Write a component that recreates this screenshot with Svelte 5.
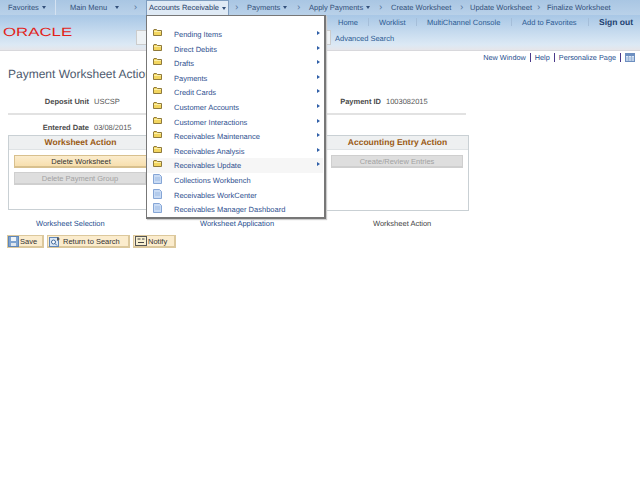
<script>
  const nav = [
    { label: 'Favorites', cls: 'w-fav', caret: true },
    { label: 'Main Menu', cls: 'w-main', caret: true, sep: true },
    { label: 'Accounts Receivable', cls: 'w-ar', caret: true, active: true },
    { label: 'Payments', cls: 'w-pay', caret: true, chev: true },
    { label: 'Apply Payments', cls: 'w-apply', caret: true, chev: true },
    { label: 'Create Worksheet', cls: 'w-create', chev: true },
    { label: 'Update Worksheet', cls: 'w-update', chev: true },
    { label: 'Finalize Worksheet', cls: 'w-final', chev: true }
  ];
  const folders = ['Pending Items', 'Direct Debits', 'Drafts', 'Payments', 'Credit Cards', 'Customer Accounts', 'Customer Interactions', 'Receivables Maintenance', 'Receivables Analysis', 'Receivables Update'];
  const pages = ['Collections Workbench', 'Receivables WorkCenter', 'Receivables Manager Dashboard'];
</script>

<div class="page">
  <nav class="nav">
    {#each nav as n}
      <div class="nav-item {n.cls}" class:active={n.active} class:sep={n.sep}>
        {#if n.chev}<span class="chev">›</span>{/if}
        <span>{n.label}</span>
        {#if n.caret}<i class="caret"></i>{/if}
      </div>
    {/each}
  </nav>

  <header class="head">
    <div class="logo-col"><span class="logo">ORACLE</span></div>
    <div class="search-col">
      <div class="search-box"></div>
    </div>
    <div class="right-col">
      <div class="tools">
        <a class="t-home">Home</a>
        <a class="t-work">Worklist</a>
        <a class="t-multi">MultiChannel Console</a>
        <a class="t-add">Add to Favorites</a>
        <a class="t-sign">Sign out</a>
      </div>
      <div class="adv">Advanced Search</div>
    </div>
  </header>

  <div class="links">
    <a>New Window</a><b></b><a>Help</a><b></b><a>Personalize Page</a><b></b>
    <svg width="10" height="9" viewBox="0 0 10 9"><rect x="0.5" y="0.5" width="9" height="8" fill="#dbe8f6" stroke="#6d8fc0"/><rect x="1" y="1" width="8" height="2" fill="#6d8fc0"/><path d="M1 5h8M1 7h8M3.5 3v5M6.5 3v5" stroke="#9db6d8"/></svg>
  </div>

  <h1 class="title">Payment Worksheet Action</h1>

  <div class="fields">
    <span class="lab l1">Deposit Unit</span><span class="val">USCSP</span>
    <span class="lab l2">Payment ID</span><span class="val">1003082015</span>
  </div>
  <div class="rule"></div>
  <div class="fields date">
    <span class="lab l1">Entered Date</span><span class="val">03/08/2015</span>
  </div>

  <div class="boxes">
    <section class="box b1">
      <h2>Worksheet Action</h2>
      <button class="btn primary">Delete Worksheet</button>
      <button class="btn off short">Delete Payment Group</button>
    </section>
    <section class="box b2"></section>
    <section class="box b3">
      <h2>Accounting Entry Action</h2>
      <button class="btn off">Create/Review Entries</button>
    </section>
  </div>

  <div class="tabs">
    <a class="tab1">Worksheet Selection</a>
    <a class="tab2">Worksheet Application</a>
    <span class="tab3">Worksheet Action</span>
  </div>

  <div class="toolbar">
    <button class="tb s">
      <svg width="11" height="11" viewBox="0 0 11 11"><rect x="0.5" y="0.5" width="10" height="10" fill="#7ea3d0" stroke="#5f86b8"/><rect x="3" y="1" width="5" height="4" fill="#eef4fa"/><rect x="3" y="7" width="5" height="3" fill="#dfe6ee"/></svg>
      <span>Save</span>
    </button>
    <button class="tb r">
      <svg width="12" height="11" viewBox="0 0 12 11"><rect x="0.5" y="1.5" width="9" height="9" fill="#dbe7f5" stroke="#5f86b8"/><circle cx="4.5" cy="6" r="2" fill="#fff" stroke="#41689c"/><path d="M6 7.5l2 2" stroke="#41689c"/><path d="M8 1l3 2-3 2z" fill="#555"/></svg>
      <span>Return to Search</span>
    </button>
    <button class="tb n">
      <svg width="12" height="10" viewBox="0 0 12 10"><rect x="0.5" y="0.5" width="11" height="9" fill="#f7efd0" stroke="#555"/><path d="M2.5 3h3M7 3h2.5M3 6.5h6" stroke="#444"/></svg>
      <span>Notify</span>
    </button>
  </div>

  <div class="menu">
    {#each folders as f}
      <div class="mi" class:hover={f === 'Receivables Update'}>
        <svg class="ic" width="9" height="7" viewBox="0 0 9 7"><path d="M0.5 6.5V1l.5-.5h2.5l1 1h4v5z" fill="#f3d660" stroke="#8f7a3c"/><path d="M1 2.5h7" stroke="#fbeea8"/></svg>
        <span class="mt">{f}</span>
        <i class="arrow"></i>
      </div>
    {/each}
    {#each pages as p}
      <div class="mi">
        <svg class="ic doc" width="9" height="10" viewBox="0 0 9 10"><path d="M0.5 0.5h6l2 2v7h-8z" fill="#c9dbf4" stroke="#86a6d6"/><path d="M2 4h5M2 6h5" stroke="#9dbbe4"/></svg>
        <span class="mt">{p}</span>
      </div>
    {/each}
  </div>
</div>

<style>
  :global(body) { margin: 0; background: #fff; }
  .page { position: relative; width: 640px; height: 480px; overflow: hidden; font-family: "Liberation Sans", Arial, sans-serif; font-size: 7.5px; color: #444; text-rendering: geometricPrecision; }
  a { color: #1f4f8f; }

  .nav { display: flex; height: 15px; background: linear-gradient(#a9c6e3, #b9d1e9); color: #33507a; line-height: 14px; }
  .nav-item { position: relative; box-sizing: border-box; display: flex; align-items: center; white-space: nowrap; flex: none; }
  .w-fav { width: 56px; padding-left: 8px; border-right: 1px solid #d4e2f1; }
  .w-main { width: 90px; padding-left: 14px; }
  .w-ar { width: 83px; padding-left: 2px; background: #dfeaf5; color: #1f3d68; border: 1px solid #7f9dbf; border-bottom: 0; }
  .w-pay { width: 66px; padding-left: 4px; }
  .w-apply { width: 82px; }
  .w-create { width: 83px; }
  .w-update { width: 77px; }
  .w-final { width: 93px; }
  .chev { width: 14px; flex: none; text-align: left; font-size: 10px; color: #58759c; padding-left: 2px; box-sizing: border-box; }
  .w-update .chev, .w-final .chev { width: 10px; padding-left: 0; }
  .caret { margin-left: 3px; border: 2.5px solid transparent; border-top: 3px solid #33507a; border-bottom: 0; }
  .w-main .caret { margin-left: 8px; }
  .w-main::after { content: "›"; position: absolute; right: 9px; font-size: 10px; color: #58759c; }

  .head { display: flex; height: 36px; box-sizing: border-box; background: linear-gradient(#a8c7e6, #dce9f5 85%, #e6e6ea); border-bottom: 1px solid #d8d8dc; }
  .logo-col { width: 136px; padding: 11px 0 0 3px; box-sizing: border-box; }
  .logo { display: inline-block; color: #e2231a; font-size: 12px; line-height: 12px; font-weight: 400; transform: scaleX(1.4); transform-origin: left; }
  .search-col { width: 199px; padding-top: 15px; box-sizing: border-box; }
  .search-box { width: 195px; height: 15px; background: #eef2f5; border: 1px solid #ccc; box-sizing: border-box; }
  .right-col { flex: 1; padding-top: 1px; }
  .tools { display: flex; height: 13px; padding-left: 3px; line-height: 13px; }
  .tools a { position: relative; flex: none; color: #2b5a92; }
  .tools a:not(.t-sign)::after { content: ""; position: absolute; right: 10px; top: 2px; width: 1px; height: 8px; background: #a5bed9; }
  .t-home { width: 41px; } .t-work { width: 48px; } .t-multi { width: 95px; } .t-add { width: 77px; }
  .tools .t-sign { font-size: 8.5px; font-weight: 700; color: #1c3f70; }
  .adv { margin-top: 4px; color: #2b5a92; line-height: 12px; }

  .links { display: flex; justify-content: flex-end; align-items: center; gap: 4px; height: 12px; padding: 0 5px 0 0; font-size: 7.3px; }
  .links a { color: #1f4f8f; }
  .links b { width: 1px; height: 9px; background: #4b3a8a; }

  .title { margin: 3px 0 0 8px; font-size: 12px; line-height: 16px; font-weight: 400; color: #4d5a6e; }

  .fields { display: flex; height: 12px; margin-top: 14px; line-height: 12px; }
  .lab { font-weight: 700; color: #4a4a4a; text-align: right; box-sizing: border-box; }
  .val { padding-left: 5px; color: #555; }
  .l1 { width: 89px; }
  .fields .l2 { width: 170px; }
  .fields .val { width: 117px; }
  .rule { width: 458px; margin: 5px 0 0 8px; height: 2px; background: #e2e2e2; }
  .fields.date { margin-top: 7px; }

  .boxes { display: flex; margin: 1px 0 0 8px; width: 461px; height: 76px; }
  .box { box-sizing: border-box; border: 1px solid #c9d0d4; flex: none; height: 75px; }
  .b1 { width: 150px; } .b2 { width: 168px; } .b3 { width: 143px; height: 76px; }
  .box h2 { margin: 0; height: 13px; background: #eef0f1; border-bottom: 1px solid #dfe3e5; font-size: 8.5px; line-height: 13px; font-weight: 700; color: #9a5a14; text-align: center; }
  .b1 h2 { padding-right: 5px; }
  .btn { display: block; box-sizing: border-box; height: 13px; padding: 0; font: inherit; line-height: 11px; border: 1px solid #d8d8d8; border-bottom-width: 2px; white-space: nowrap; }
  .primary { width: 134px; margin: 5px 0 0 5px; background: linear-gradient(#fbeccd, #f7dfae); border-color: #d8c08e; color: #333; }
  .off { width: 132px; margin: 5px 0 0 5px; background: #dedede; border-color: #cfcfcf; color: #a2a2a2; }
  .b3 .off { margin-left: 4px; }
  .short { margin-top: 4px; }

  .tabs { display: flex; height: 17px; margin-top: 6px; padding: 1px 0 0 36px; line-height: 12px; }
  .tab1 { width: 164px; flex: none; } .tab2 { width: 173px; flex: none; } .tab3 { color: #444; }

  .toolbar { display: flex; gap: 3px; padding-left: 7px; }
  .tb { display: flex; align-items: center; gap: 1px; box-sizing: border-box; height: 13px; padding: 0; font: inherit; color: #333; background: #fbeccd; border: 1px solid #dcc89c; border-right-width: 2px; border-bottom-width: 2px; white-space: nowrap; }
  .tb.s { width: 37px; } .tb.r { width: 83px; gap: 2px; padding-left: 1px; } .tb.n { width: 43px; padding-left: 1px; }

  .menu { position: absolute; left: 146px; top: 15px; box-sizing: border-box; width: 180px; height: 204px; padding-top: 11px; background: #fff; border: 1px solid #777; border-right-width: 2px; border-bottom-width: 2px; box-shadow: 1px 1px 1px #ccc; }
  .mi { position: relative; display: flex; align-items: center; height: 14.6px; width: 176px; color: #2f4f8f; }
  .mi.hover { background: #f6f6f6; }
  .ic { position: absolute; left: 6px; top: 2px; }
  .doc { top: 1px; }
  .mt { position: absolute; left: 27px; top: 2px; line-height: 12px; white-space: nowrap; }
  .arrow { position: absolute; right: 3px; top: 4px; border: 2.5px solid transparent; border-left: 3px solid #2f5fa8; border-right: 0; }
</style>
